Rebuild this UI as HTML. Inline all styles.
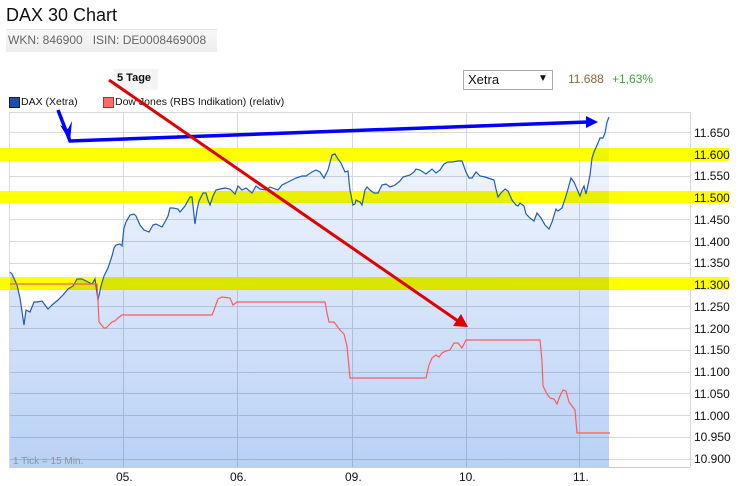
<!DOCTYPE html>
<html><head><meta charset="utf-8"><style>
body{margin:0;width:744px;height:486px;background:#fff;font-family:"Liberation Sans",Arial,sans-serif;position:relative;overflow:hidden}
.a{position:absolute;white-space:nowrap}
</style></head><body>
<div class="a" style="left:6px;top:5px;font-size:18px;color:#111">DAX 30 Chart</div>
<div class="a" style="left:6px;top:29px;width:211px;height:22px;background:linear-gradient(#f8f8f8,#ececec);border-top:1px solid #e4e4e4"></div>
<div class="a" style="left:8px;top:33px;font-size:12px;color:#666">WKN: 846900&nbsp;&nbsp;&nbsp;ISIN: DE0008469008</div>
<div class="a" style="left:114px;top:69px;width:44px;height:21px;background:#f4f4f4"></div>
<div class="a" style="left:117px;top:72px;font-size:11px;font-weight:bold;color:#111">5 Tage</div>
<div class="a" style="left:463px;top:70px;width:88px;height:18px;border:1px solid #aaa;background:#fff"></div>
<div class="a" style="left:468px;top:72px;font-size:13px;color:#111">Xetra</div>
<div class="a" style="left:538px;top:73px;font-size:10px;color:#111">▼</div>
<div class="a" style="left:568px;top:72px;font-size:12px;color:#8a6a30">11.688</div>
<div class="a" style="left:612px;top:72px;font-size:12px;color:#3aa53a">+1,63%</div>
<div class="a" style="left:9px;top:97px;width:9px;height:9px;background:#1a4fb0;border:1px solid #123"></div>
<div class="a" style="left:21px;top:96px;font-size:10.5px;color:#111">DAX (Xetra)</div>
<div class="a" style="left:103px;top:97px;width:9px;height:9px;background:#ff6a6a;border:1px solid #a33"></div>
<div class="a" style="left:115px;top:96px;font-size:10.5px;color:#111">Dow Jones (RBS Indikation) (relativ)</div>
<svg class="a" style="left:0;top:0" width="744" height="486">
<defs><linearGradient id="g" x1="0" y1="0" x2="0" y2="1"><stop offset="0" stop-color="#f6f9fe"/><stop offset="1" stop-color="#b9d1f6"/></linearGradient></defs>
<g stroke="#d9d9d9" stroke-width="1">
<line x1="9" y1="112.5" x2="690" y2="112.5"/>
<line x1="9" y1="132.5" x2="690" y2="132.5"/><line x1="9" y1="154.5" x2="690" y2="154.5"/><line x1="9" y1="176.5" x2="690" y2="176.5"/><line x1="9" y1="197.5" x2="690" y2="197.5"/><line x1="9" y1="219.5" x2="690" y2="219.5"/><line x1="9" y1="241.5" x2="690" y2="241.5"/><line x1="9" y1="263.5" x2="690" y2="263.5"/><line x1="9" y1="284.5" x2="690" y2="284.5"/><line x1="9" y1="306.5" x2="690" y2="306.5"/><line x1="9" y1="328.5" x2="690" y2="328.5"/><line x1="9" y1="350.5" x2="690" y2="350.5"/><line x1="9" y1="372.5" x2="690" y2="372.5"/><line x1="9" y1="393.5" x2="690" y2="393.5"/><line x1="9" y1="415.5" x2="690" y2="415.5"/><line x1="9" y1="437.5" x2="690" y2="437.5"/><line x1="9" y1="459.5" x2="690" y2="459.5"/>
<line x1="9.5" y1="112" x2="9.5" y2="467"/><line x1="123.5" y1="112" x2="123.5" y2="467"/><line x1="237.5" y1="112" x2="237.5" y2="467"/><line x1="352.5" y1="112" x2="352.5" y2="467"/><line x1="466.5" y1="112" x2="466.5" y2="467"/><line x1="579.5" y1="112" x2="579.5" y2="467"/><line x1="690.5" y1="112" x2="690.5" y2="467"/>
<line x1="9" y1="467.5" x2="690" y2="467.5" stroke="#ccc"/>
</g>
<g fill="#ffff00"><rect x="0" y="148" width="729" height="13"/><rect x="0" y="191" width="729" height="12"/><rect x="0" y="277" width="729" height="13"/></g>
<polygon style="mix-blend-mode:multiply" fill="url(#g)" points="10,467 10,272 12,274 17,285 20,298 24,325 26,310 30,312 34,302 37,302 42,301 48,309 52,305 58,300 63,295 68,289 73,286 77,279 82,279 86,281 92,284 95,279 97,293 98,300 101,286 104,276 108,268 110,262 112,256 114,248 116,245 120,244 122,246 124,228 126,222 130,215 134,214 136,216 140,225 144,230 149,232 153,225 156,224 160,226 162,227 166,220 168,216 170,208 173,208 178,209 180,212 185,206 190,197 192,197 195,224 197,210 199,201 203,193 206,193 208,200 210,205 213,196 216,190 220,189 225,188 230,189 235,194 238,186 242,190 246,188 252,193 256,186 260,189 266,190 270,187 278,190 282,185 286,183 290,181 296,178 302,176 306,176 312,172 316,170 320,172 324,178 328,170 332,155 335,154 338,159 341,163 345,172 348,171 349,181 350,190 353,205 355,204 356,200 358,201 360,202 362,205 365,190 367,187 370,190 374,193 378,193 382,185 386,184 390,187 393,186 395,185 400,181 403,177 410,175 414,172 416,169 420,170 426,174 432,169 436,173 440,170 444,164 448,162 452,162 458,161 462,161 466,172 469,178 472,178 476,172 480,176 485,177 491,179 494,180 496,189 498,197 501,193 505,189 508,191 512,200 516,205 518,206 520,203 524,206 526,214 530,218 534,221 537,213 541,218 545,225 549,229 552,222 556,209 558,211 562,208 565,199 568,189 571,178 574,182 577,189 580,196 582,190 584,186 586,194 588,185 590,175 592,158 594,152 598,143 600,138 603,138 605,133 607,122 609,117 609,467"/>
<polyline fill="none" stroke="#1f5bc4" stroke-width="1.2" points="10,272 12,274 17,285 20,298 24,325 26,310 30,312 34,302 37,302 42,301 48,309 52,305 58,300 63,295 68,289 73,286 77,279 82,279 86,281 92,284 95,279 97,293 98,300 101,286 104,276 108,268 110,262 112,256 114,248 116,245 120,244 122,246 124,228 126,222 130,215 134,214 136,216 140,225 144,230 149,232 153,225 156,224 160,226 162,227 166,220 168,216 170,208 173,208 178,209 180,212 185,206 190,197 192,197 195,224 197,210 199,201 203,193 206,193 208,200 210,205 213,196 216,190 220,189 225,188 230,189 235,194 238,186 242,190 246,188 252,193 256,186 260,189 266,190 270,187 278,190 282,185 286,183 290,181 296,178 302,176 306,176 312,172 316,170 320,172 324,178 328,170 332,155 335,154 338,159 341,163 345,172 348,171 349,181 350,190 353,205 355,204 356,200 358,201 360,202 362,205 365,190 367,187 370,190 374,193 378,193 382,185 386,184 390,187 393,186 395,185 400,181 403,177 410,175 414,172 416,169 420,170 426,174 432,169 436,173 440,170 444,164 448,162 452,162 458,161 462,161 466,172 469,178 472,178 476,172 480,176 485,177 491,179 494,180 496,189 498,197 501,193 505,189 508,191 512,200 516,205 518,206 520,203 524,206 526,214 530,218 534,221 537,213 541,218 545,225 549,229 552,222 556,209 558,211 562,208 565,199 568,189 571,178 574,182 577,189 580,196 582,190 584,186 586,194 588,185 590,175 592,158 594,152 598,143 600,138 603,138 605,133 607,122 609,117"/>
<polyline fill="none" stroke="#ff5a5a" stroke-width="1.2" points="10,284 97,284 98,300 99,322 104,328 106,328 108,326 112,322 115,321 118,318 122,315 212,315 214,310 218,299 222,297 230,298 233,305 237,302 325,302 327,313 329,322 334,322 340,330 344,334 347,346 350,378 426,378 429,365 432,358 436,355 439,357 442,353 446,351 450,350 454,343 458,343 462,348 466,340 540,340 542,361 543,386 547,394 550,398 554,399 557,404 560,396 563,390 566,391 569,402 572,406 575,410 577,433 610,433"/>
<g stroke="#0000ff" stroke-width="3.5" fill="none"><polyline points="58,110 70,141 588,122"/></g>
<polygon fill="#0000ff" points="60,125 70,141 72,121 68,129"/>
<polygon fill="#0000ff" points="586,116 598,122 586,128"/>
<line x1="109" y1="80" x2="458" y2="321" stroke="#e00000" stroke-width="3"/>
<polygon fill="#e00000" points="453,326 468,327 461,314"/>
<g font-size="12" fill="#111">
<text x="694" y="137">11.650</text><text x="694" y="159">11.600</text><text x="694" y="180">11.550</text><text x="694" y="202">11.500</text><text x="694" y="224">11.450</text><text x="694" y="246">11.400</text><text x="694" y="267">11.350</text><text x="694" y="289">11.300</text><text x="694" y="311">11.250</text><text x="694" y="333">11.200</text><text x="694" y="354">11.150</text><text x="694" y="376">11.100</text><text x="694" y="398">11.050</text><text x="694" y="420">11.000</text><text x="694" y="441">10.950</text><text x="694" y="463">10.900</text>
<text x="116" y="481">05.</text><text x="230" y="481">06.</text><text x="345" y="481">09.</text><text x="459" y="481">10.</text><text x="573" y="481">11.</text>
</g>
<text x="13" y="464" font-size="10" fill="#8a93a0">1 Tick = 15 Min.</text>
</svg>
</body></html>
